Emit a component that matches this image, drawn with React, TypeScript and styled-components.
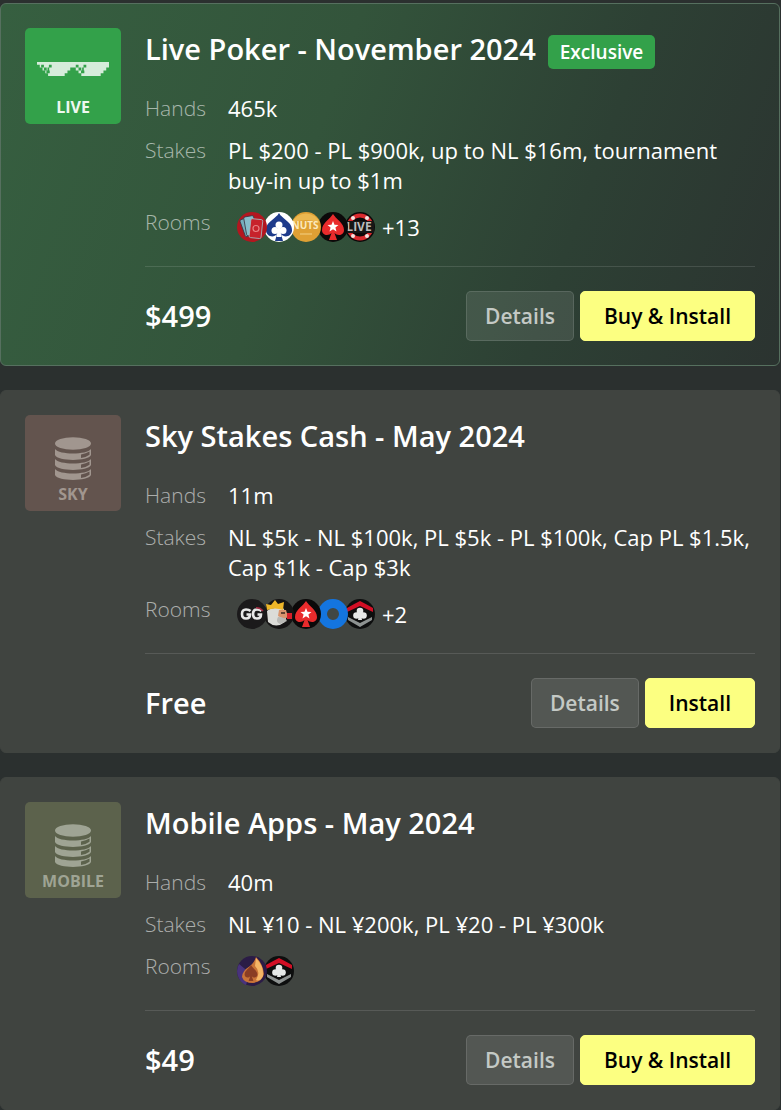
import React from "react";
import styled, { createGlobalStyle, css } from "styled-components";

const GlobalStyle = createGlobalStyle`
  * { box-sizing: border-box; }
  body {
    margin: 0;
    background: #2b302f;
    color: #fff;
    font-family: "Segoe UI", "Open Sans", "Noto Sans", sans-serif;
    font-size: 22px;
    line-height: 30px;
  }
`;

const List = styled.main`
  display: flex;
  flex-direction: column;
  gap: 24px;
  padding: 3px 1px 1px 0;
`;

const Card = styled.article<{ $featured?: boolean }>`
  display: flex;
  align-items: flex-start;
  gap: 24px;
  padding: 24px;
  border: 1px solid #404440;
  border-radius: 6px;
  background: #404440;
  ${(p) =>
    p.$featured &&
    css`
      border-color: #56705f;
      background: linear-gradient(110deg, #365f40 0%, #33543b 40%, #2d4034 72%, #2b3330 100%);
    `}
`;

const Thumb = styled.div<{ $bg: string; $fg: string }>`
  flex: none;
  display: flex;
  flex-direction: column;
  align-items: center;
  justify-content: flex-end;
  gap: 3px;
  width: 96px;
  height: 96px;
  padding-bottom: 7px;
  border-radius: 5px;
  background: ${(p) => p.$bg};
  color: ${(p) => p.$fg};
  font-size: 16px;
  font-weight: 700;
  line-height: 20px;
`;

const Body = styled.div`
  flex: 1;
  min-width: 0;
`;

const Header = styled.header`
  display: flex;
  align-items: flex-end;
  gap: 12px;
  margin-bottom: 24px;
`;

const Title = styled.h2`
  margin: 0;
  font-size: 29px;
  font-weight: 600;
  line-height: 41px;
`;

const Badge = styled.span`
  padding: 2px 12px;
  border-radius: 5px;
  background: #33a14a;
  font-size: 19px;
  font-weight: 600;
`;

const Facts = styled.dl`
  display: grid;
  grid-template-columns: 83px 1fr;
  row-gap: 12px;
  margin: 0;
  padding-bottom: 24px;
  border-bottom: 1px solid rgba(255, 255, 255, 0.12);
`;

const Label = styled.dt`
  color: rgba(255, 255, 255, 0.58);
  font-size: 21px;
  font-weight: 300;
`;

const Value = styled.dd`
  margin: 0;
`;

const Rooms = styled(Value)`
  display: flex;
  align-items: center;
  padding: 5px 0 0 9px;
`;

const RoomIcon = styled.svg<{ $order: number }>`
  position: relative;
  z-index: ${(p) => p.$order};
  width: 30px;
  height: 30px;
  margin-right: -3px;
`;

const More = styled.span`
  margin-left: 10px;
`;

const Footer = styled.footer`
  display: flex;
  align-items: center;
  gap: 6px;
  padding-top: 24px;
`;

const Price = styled.strong`
  flex: 1;
  font-size: 29px;
  font-weight: 600;
`;

const Button = styled.button<{ $primary?: boolean }>`
  height: 50px;
  padding: 0 18px;
  border: 1px solid rgba(255, 255, 255, 0.12);
  border-radius: 5px;
  background: rgba(255, 255, 255, 0.1);
  color: #c4c9c5;
  font: inherit;
  font-size: 21px;
  font-weight: 600;
  ${(p) =>
    p.$primary &&
    css`
      padding: 0 23px;
      border-color: #fcff81;
      background: #fcff81;
      color: #000;
    `}
`;

const GlassesIcon = styled.svg`
  margin-bottom: 18px;
`;

const Glasses = () => (
  <GlassesIcon width="72" height="14" viewBox="0 0 26 5" preserveAspectRatio="none" aria-hidden="true">
    <path
      fill="#d6ecdb"
      d="M0 0H26V2H25V3H24V4H23V5H16V4H15V3H14V2H12V3H11V4H10V5H4V4H3V3H2V2H1V1H0Z"
    />
    <path
      fill="#33a14a"
      d="M1.500 1h1v1h-1zM4.300 1h1v1h-1zM2.500 2h1v1h-1zM3.800 2h.6v1h-.6zM3.400 3h1.200v1h-1.200zM14 1h1v1h-1zM16.800 1h1v1h-1zM15 2h1v1h-1zM16.300 2h.6v1h-.6zM15.900 3h1.200v1h-1.200z"
    />
  </GlassesIcon>
);

const Disks = () => (
  <svg width="36" height="44" viewBox="0 0 36 44" fill="currentColor" aria-hidden="true">
    <ellipse cx="18" cy="6.500" rx="18" ry="6.200" />
    {[12, 22, 32].map((y) => (
      <path
        key={y}
        fillRule="evenodd"
        d={`M0 ${y}C4 ${y + 6} 32 ${y + 6} 36 ${y}V${y + 6}C33 ${y + 12.5} 3 ${y + 12.5} 0 ${y + 6}ZM26 ${y + 5.4}V${y + 9}Q31 ${y + 8.5} 34.5 ${y + 5.8}V${y + 2.6}Q31 ${y + 4.8} 26 ${y + 5.4}Z`}
      />
    ))}
  </svg>
);

const spade = "M15 5C13 9 7 12 7 17C7 21 12 22 14 19L12 25H18L16 19C18 22 23 21 23 17C23 12 17 9 15 5Z";

const Crest = () => (
  <>
    <circle cx="15" cy="15" r="15" fill="#0d0e0e" />
    <path d="M2 13V9Q9 5 15 2Q21 5 28 9V13L15 7Z" fill="#d20f25" />
    <path d="M3 18L15 24L27 18V21L15 28L3 21Z" fill="#8d9291" />
    <g fill="#e6e9e8">
      <circle cx="15" cy="12" r="3.300" />
      <circle cx="11.500" cy="16.500" r="3.300" />
      <circle cx="18.500" cy="16.500" r="3.300" />
      <path d="M14 15h2l1 6h-4z" />
    </g>
  </>
);

const art: Record<string, React.ReactNode> = {
  cards: (
    <>
      <circle cx="15" cy="15" r="15" fill="#b3161f" />
      <g stroke="#3b3745" strokeWidth="0.8">
        <rect x="5" y="6" width="10" height="18" rx="1.500" fill="#75aebc" transform="rotate(-20 10 14)" />
        <rect x="8" y="4" width="10" height="19" rx="1.500" fill="#86becb" transform="rotate(-10 14 13)" />
        <rect x="13" y="7" width="12" height="19" rx="1.500" fill="#c7222b" stroke="#a5bdc4" transform="rotate(6 18 16)" />
      </g>
      <circle cx="19" cy="16.500" r="3" fill="none" stroke="#e78082" strokeWidth="1.200" />
    </>
  ),
  blueSpade: (
    <>
      <circle cx="15" cy="15" r="15" fill="#fff" />
      <path d="M15 1C12 7 1 10 2 19C3 25 10 26 13 22L11 29H19L17 22C20 26 27 25 28 19C29 10 18 7 15 1Z" fill="#1e3b8b" />
      <g fill="#fff">
        <circle cx="15" cy="13" r="3.500" />
        <circle cx="11" cy="18.500" r="3.500" />
        <circle cx="19" cy="18.500" r="3.500" />
        <path d="M14 16h2l1.500 9h-5z" />
      </g>
    </>
  ),
  gold: (
    <>
      <circle cx="15" cy="15" r="15" fill="#dfa034" />
      <path d="M1 11A15 15 0 0 1 29 11Q15 5 1 11Z" fill="#ecb850" />
      <text x="14" y="17" textAnchor="middle" fontSize="10" fontWeight="700" fill="#fbe9bd">NUTS</text>
      <path d="M9 22h12" stroke="#edc06a" strokeWidth="1.500" />
    </>
  ),
  star: (
    <>
      <circle cx="15" cy="15" r="15" fill="#0b0909" />
      <path d="M15 2C12 7 4 11 4 18C4 24 11 24 13.500 21L11 28H19L16.500 21C19 24 26 24 26 18C26 11 18 7 15 2Z" fill="#e92b2c" />
      <path d="M15 9l1.500 3.800 4 .2-3.100 2.500 1.100 4-3.500-2.300-3.500 2.300 1.100-4-3.100-2.500 4-.2z" fill="#fff" />
    </>
  ),
  live: (
    <>
      <circle cx="15" cy="15" r="15" fill="#0b0909" />
      <circle cx="15" cy="15" r="11.500" fill="none" stroke="#d92a2e" strokeWidth="4" />
      <g fill="#f4e5e2">
        <circle cx="8" cy="6" r="2" />
        <circle cx="22" cy="6" r="2" />
        <circle cx="8" cy="24" r="2" />
        <circle cx="22" cy="24" r="2" />
      </g>
      <path d="M1 9h28v12h-28z" fill="#171616" />
      <text x="14" y="19" textAnchor="middle" fontSize="12" fontWeight="700" fill="#bdbdbd">LIVE</text>
    </>
  ),
  gg: (
    <>
      <circle cx="15" cy="15" r="15" fill="#1b1a1b" />
      <path d="M13.500 12Q12 10.500 9 10.500Q5 10.500 5 15Q5 19.500 9 19.500Q13 19.500 13 15.500H9.500" fill="none" stroke="#e8e8e8" strokeWidth="2.600" />
      <path d="M24.500 12Q23 10.500 20 10.500Q16 10.500 16 15Q16 19.500 20 19.500Q24 19.500 24 15.500H20.500" fill="none" stroke="#e8e8e8" strokeWidth="2.600" />
      <path d="M19 8.800Q23 8.500 26 12" fill="none" stroke="#a32b42" strokeWidth="1.500" />
    </>
  ),
  king: (
    <>
      <circle cx="15" cy="15" r="15" fill="#151414" />
      <path d="M3 12Q7 8 19 9L23 15L21 23Q12 30 4 23Z" fill="#dcdcd8" />
      <path d="M15 11L22 11L24 18L20 20L14 17Z" fill="#d9956e" />
      <path d="M17 14h4" stroke="#3b2820" strokeWidth="1.500" />
      <path d="M14 18Q21 18 23 22L16 25Q11 23 14 18Z" fill="#b9b9b5" />
      <path d="M3 11L2 5L7 6L11 1L14 5L20 3L19 11Q11 8 3 11Z" fill="#edb629" />
      <path d="M23 14h5v6h-5z" fill="#d51f29" />
    </>
  ),
  ring: <circle cx="15" cy="15" r="10.500" fill="#414743" stroke="#1475df" strokeWidth="9" />,
  crest: <Crest />,
  fire: (
    <>
      <circle cx="15" cy="15" r="15" fill="#2b1c46" />
      <path d="M2 8A15 15 0 0 0 9 29L13 17Z" fill="#49337d" />
      <path d="M19 1Q26 8 27 18Q25 26 16 27Q7 27 5 21Q5 15 13 10Q17 7 19 1Z" fill="#c97338" />
      <path d="M19 2Q27 10 26 20Q23 26 19 24Q24 16 18 10Z" fill="#f4b566" />
      <path d={spade} fill="#8a3d24" transform="translate(2 5) scale(.8)" />
    </>
  ),
};

type Pack = {
  title: string;
  badge?: string;
  tag: string;
  bg: string;
  fg: string;
  hands: string;
  stakes: string;
  rooms: string[];
  more?: string;
  price: string;
  action: string;
};

const packs: Pack[] = [
  {
    title: "Live Poker - November 2024",
    badge: "Exclusive",
    tag: "LIVE",
    bg: "#33a14a",
    fg: "#eef8f0",
    hands: "465k",
    stakes: "PL $200 - PL $900k, up to NL $16m, tournament buy-in up to $1m",
    rooms: ["cards", "blueSpade", "gold", "star", "live"],
    more: "+13",
    price: "$499",
    action: "Buy & Install",
  },
  {
    title: "Sky Stakes Cash - May 2024",
    tag: "SKY",
    bg: "#63544e",
    fg: "#a1968f",
    hands: "11m",
    stakes: "NL $5k - NL $100k, PL $5k - PL $100k, Cap PL $1.5k, Cap $1k - Cap $3k",
    rooms: ["gg", "king", "star", "ring", "crest"],
    more: "+2",
    price: "Free",
    action: "Install",
  },
  {
    title: "Mobile Apps - May 2024",
    tag: "MOBILE",
    bg: "#5c624c",
    fg: "#9fa494",
    hands: "40m",
    stakes: "NL ¥10 - NL ¥200k, PL ¥20 - PL ¥300k",
    rooms: ["fire", "crest"],
    price: "$49",
    action: "Buy & Install",
  },
];

export default function App() {
  return (
    <>
      <GlobalStyle />
      <List>
        {packs.map((p) => (
          <Card key={p.title} $featured={!!p.badge}>
            <Thumb $bg={p.bg} $fg={p.fg}>
              {p.badge ? <Glasses /> : <Disks />}
              <span>{p.tag}</span>
            </Thumb>
            <Body>
              <Header>
                <Title>{p.title}</Title>
                {p.badge && <Badge>{p.badge}</Badge>}
              </Header>
              <Facts>
                <Label>Hands</Label>
                <Value>{p.hands}</Value>
                <Label>Stakes</Label>
                <Value>{p.stakes}</Value>
                <Label>Rooms</Label>
                <Rooms>
                  {p.rooms.map((r, i) => (
                    <RoomIcon key={r} $order={p.rooms.length - i} viewBox="0 0 30 30" aria-hidden="true">
                      {art[r]}
                    </RoomIcon>
                  ))}
                  {p.more && <More>{p.more}</More>}
                </Rooms>
              </Facts>
              <Footer>
                <Price>{p.price}</Price>
                <Button type="button">Details</Button>
                <Button type="button" $primary>
                  {p.action}
                </Button>
              </Footer>
            </Body>
          </Card>
        ))}
      </List>
    </>
  );
}
